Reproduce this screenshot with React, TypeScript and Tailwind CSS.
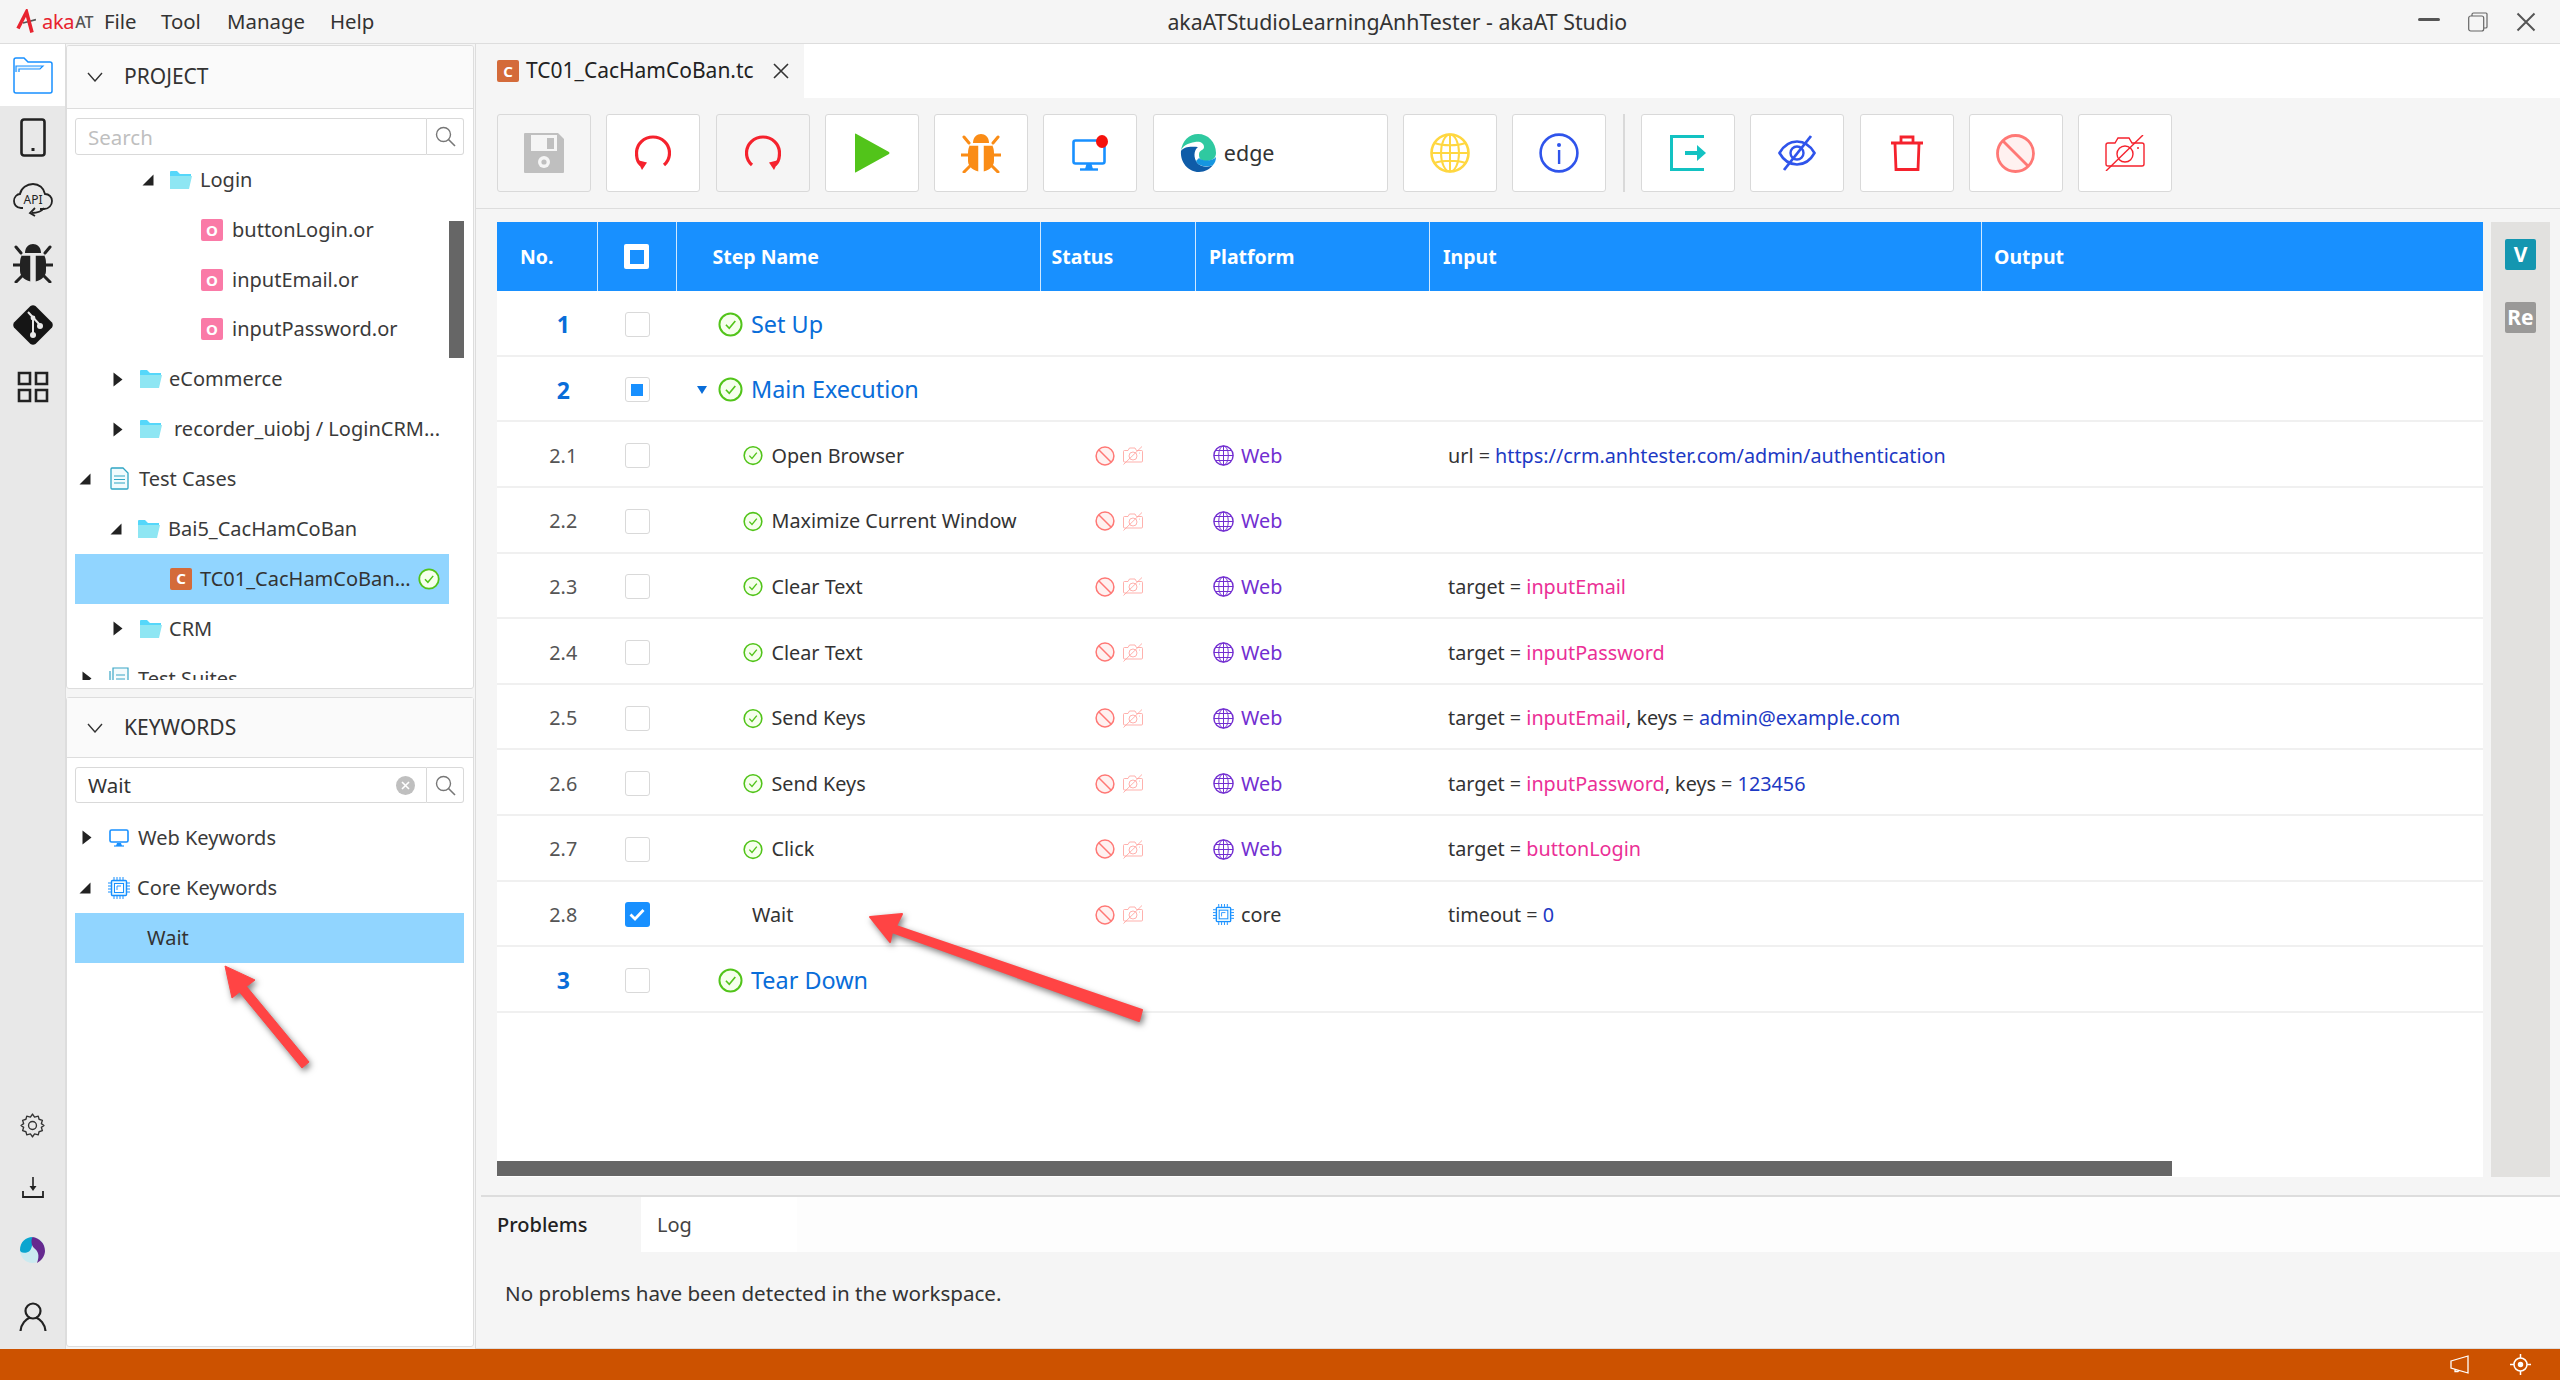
import React from "react";

const Svg = ({ s = 40, w, h, children, vb = "0 0 40 40", className = "" }: any) => (
  <svg width={w ?? s} height={h ?? s} viewBox={vb} fill="none" className={"shrink-0 " + className}>
    {children}
  </svg>
);

const Logo = () => (
  <div className="flex items-center w-[104px] pl-[16px] shrink-0">
    <svg width="20" height="25" viewBox="0 0 20 25" fill="none" className="shrink-0">
      <path d="M7 14 L20 10.5" stroke="#555" strokeWidth="1.8" />
      <path d="M2 19.5 L10.5 3 L16 23.5" stroke="#e8232f" strokeWidth="3.6" strokeLinejoin="miter" />
    </svg>
    <span className="text-[20px] leading-none text-[#e8232f] ml-[6px] tracking-[-0.3px]">aka</span>
    <span className="text-[16px] leading-none text-[#555] font-medium ml-[1px]">AT</span>
  </div>
);

const Expanded = () => (
  <svg width="12" height="12" viewBox="0 0 12 12" className="shrink-0">
    <path d="M11.5 0.5 V11.5 H0.5 Z" fill="#222" />
  </svg>
);
const Collapsed = () => (
  <svg width="10" height="15" viewBox="0 0 10 15" className="shrink-0">
    <path d="M0.5 0.5 L9.5 7.5 L0.5 14.5 Z" fill="#222" />
  </svg>
);
const Folder = () => (
  <svg width="22" height="18" viewBox="0 0 22 18" className="shrink-0">
    <path d="M0 1 Q0 0 1 0 H7 L10 3 H21 V6 H0 Z" fill="#55d7fa" />
    <path d="M0 5 H22 L19 18 H0 Z" fill="#8ee6f3" />
  </svg>
);
const OBadge = () => (
  <span className="w-[22px] h-[22px] rounded-[2px] bg-[#fa7aa7] text-white text-[15px] font-bold leading-[22px] text-center shrink-0">O</span>
);
const CBadge = ({ sz = 22 }: { sz?: number }) => (
  <span
    className="rounded-[2px] bg-[#d46b3a] text-white text-[15px] font-bold text-center shrink-0 flex items-center justify-center"
    style={{ width: sz, height: sz }}
  >
    C
  </span>
);
const CheckCircle = ({ s = 20, w, h }: { s?: number; w?: number; h?: number }) => (
  <svg width={w ?? s} height={h ?? s} viewBox="0 0 24 24" className="shrink-0">
    <circle cx="12" cy="12" r="10.6" fill="#f6ffed" stroke="#52c41a" strokeWidth="1.9" />
    <path d="M7.6 12.2 L10.8 15.6 L16.6 8.6" fill="none" stroke="#52c41a" strokeWidth="1.6" />
  </svg>
);
const DocIcon = () => (
  <svg width="19" height="23" viewBox="0 0 19 23" className="shrink-0">
    <path d="M1 2 Q1 1 2 1 H13 L18 6 V21 Q18 22 17 22 H2 Q1 22 1 21 Z" fill="#f1fbfd" stroke="#2fa5c4" strokeWidth="1.3" />
    <path d="M4 9 H15 M4 12.5 H15 M4 16 H15" stroke="#2fa5c4" strokeWidth="1.2" />
  </svg>
);
const SuitesIcon = () => (
  <svg width="20" height="23" viewBox="0 0 20 23" className="shrink-0">
    <path d="M1 4 V21 H16 M4 1 H19 V18 H4 Z" fill="#f4fbfd" stroke="#3aa6c6" strokeWidth="1.2" />
    <path d="M7 8 H16 M7 12 H16" stroke="#3aa6c6" strokeWidth="1.2" />
  </svg>
);
const MonitorIcon = () => (
  <svg width="20" height="18" viewBox="0 0 20 18" className="shrink-0">
    <rect x="1" y="1" width="18" height="12" rx="1.5" fill="#fff" stroke="#1890ff" strokeWidth="1.6" />
    <path d="M7 17 L8 14 H12 L13 17 Z" fill="#1890ff" />
    <path d="M5 17 H15" stroke="#1890ff" strokeWidth="1.2" />
  </svg>
);
const Chip = ({ s = 22 }: { s?: number }) => (
  <svg width={s} height={s} viewBox="0 0 22 22" className="shrink-0">
    <rect x="3.5" y="3.5" width="15" height="15" rx="1" fill="#e6f7ff" stroke="#1890ff" strokeWidth="1.4" />
    <rect x="6.5" y="6.5" width="9" height="9" fill="#fff" stroke="#1890ff" strokeWidth="1" />
    <path d="M9 9 H13 M9 9 V13" stroke="#1890ff" strokeWidth="0.9" />
    <path d="M6 0 V3 M9 0 V3 M12 0 V3 M15 0 V3 M6 19 V22 M9 19 V22 M12 19 V22 M15 19 V22 M0 6 H3 M0 9 H3 M0 12 H3 M0 15 H3 M19 6 H22 M19 9 H22 M19 12 H22 M19 15 H22" stroke="#1890ff" strokeWidth="1" />
  </svg>
);
const SearchGlass = () => (
  <svg width="21" height="21" viewBox="0 0 21 21" className="shrink-0">
    <circle cx="8.5" cy="8.5" r="7" fill="none" stroke="#777" strokeWidth="1.4" />
    <path d="M13.5 13.5 L20 20" stroke="#777" strokeWidth="1.6" />
  </svg>
);
const Chevron = () => (
  <svg width="16" height="10" viewBox="0 0 16 10" className="shrink-0">
    <path d="M1 1 L8 9 L15 1" fill="none" stroke="#333" strokeWidth="1.4" />
  </svg>
);

const Row = ({ pl, children }: { pl: string; children: React.ReactNode }) => (
  <div className={"h-[49.85px] flex items-center text-[20px] leading-none text-[#3a3a3a] whitespace-nowrap " + pl}>{children}</div>
);

const PanelHeader = ({ title, h }: { title: string; h: string }) => (
  <div className={"shrink-0 flex items-center bg-[#fafafa] border-b border-[#ddd] pl-[20px] text-[21px] text-[#333] " + h}>
    <Chevron />
    <span className="ml-[21px]">{title}</span>
  </div>
);

const SearchBox = ({ value }: { value?: string }) => (
  <div className={"flex ml-[8px] mr-[9px] mt-[9px] shrink-0 " + (value ? "h-[36px]" : "h-[37px]")}>
    <div className="flex-1 border border-[#d9d9d9] rounded-l-[3px] flex items-center pl-[12px] pr-[11px] pt-[1px] text-[20.5px] bg-white">
      {value ? <span className="text-[#333] flex-1">{value}</span> : <span className="text-[#bfbfbf]">Search</span>}
      {value && (
        <span className="w-[19px] h-[19px] rounded-full bg-[#bfbfbf] flex items-center justify-center">
          <svg width="9" height="9" viewBox="0 0 9 9">
            <path d="M1 1 L8 8 M8 1 L1 8" stroke="#fff" strokeWidth="1.6" />
          </svg>
        </span>
      )}
    </div>
    <div className="w-[37px] border border-l-0 border-[#d9d9d9] rounded-r-[3px] flex items-center justify-center bg-white">
      <SearchGlass />
    </div>
  </div>
);

const Rail = () => (
  <div className="w-[66px] shrink-0 bg-[#e8e8e8] border-r border-[#ddd] flex flex-col justify-between pb-[17px]">
    <div className="flex flex-col">
      <div className="h-[62px] bg-white flex items-center justify-center">
        <Svg w={40} h={37} vb="0 0 40 37">
          <path d="M1 34 V3 Q1 1 3 1 H11 L15 5 H37 Q39 5 39 7 V34 Q39 36 37 36 H3 Q1 36 1 34 Z" fill="#fff" stroke="#1890ff" strokeWidth="1.5" />
          <path d="M3 15 V9 H30 L27 12 H6 V15" fill="#e6f4ff" stroke="#1890ff" strokeWidth="1.2" />
        </Svg>
      </div>
      <div className="h-[63px] flex items-center justify-center">
        <Svg w={26} h={39} vb="0 0 26 39">
          <rect x="1.5" y="1.5" width="23" height="36" rx="2.5" stroke="#222" strokeWidth="2.6" />
          <rect x="11.5" y="30" width="3" height="3" fill="#222" />
        </Svg>
      </div>
      <div className="h-[62px] flex items-center justify-center">
        <svg width="40" height="34" viewBox="0 0 40 34" className="shrink-0">
          <path d="M10 25 H8 C3 25 1 21 1 18 C1 14 4 11 7 11 C8 5 14 1 20 1 C26 1 31 5 32 11 C36 11 39 14 39 18 C39 22 36 26 31 26 H27" fill="none" stroke="#222" strokeWidth="1.8" />
          <path d="M31 25 C28 29 24 30 19 30 M22 25 L17 30 L22 33" fill="none" stroke="#222" strokeWidth="1.8" />
          <text x="20" y="21" textAnchor="middle" fontSize="12" fill="#222" fontFamily="Noto Sans">API</text>
        </svg>
      </div>
      <div className="h-[63px] flex items-center justify-center">
        <BugIcon color="#222" bg="#e8e8e8" />
      </div>
      <div className="h-[62px] flex items-center justify-center">
        <svg width="40" height="40" viewBox="0 0 40 40" className="shrink-0">
          <path d="M17.5 1 Q20 -0.5 22.5 1 L39 17.5 Q40.5 20 39 22.5 L22.5 39 Q20 40.5 17.5 39 L1 22.5 Q-0.5 20 1 17.5 Z" fill="#151515" />
          <path d="M15 7 L27 20 M20 13 V30" stroke="#e8e8e8" strokeWidth="2" />
          <circle cx="20" cy="30" r="3" fill="#e8e8e8" />
          <circle cx="27" cy="21" r="3" fill="#e8e8e8" />
          <circle cx="20" cy="13" r="2.4" fill="#e8e8e8" />
        </svg>
      </div>
      <div className="h-[62px] flex items-center justify-center">
        <svg width="32" height="32" viewBox="0 0 32 32" className="shrink-0">
          <path d="M2 2 H13 V13 H2 Z M19 2 H30 V13 H19 Z M2 19 H13 V30 H2 Z M19 19 H30 V30 H19 Z" fill="none" stroke="#222" strokeWidth="2.6" />
        </svg>
      </div>
    </div>
    <div className="flex flex-col gap-[39px] items-center">
      <svg width="25" height="25" viewBox="0 0 24 24" className="shrink-0">
        <path d="M12 1 L14 4 L17.5 3 L18.3 6 L21.5 7 L20.5 10.2 L23 12 L20.5 13.8 L21.5 17 L18.3 18 L17.5 21 L14 20 L12 23 L10 20 L6.5 21 L5.7 18 L2.5 17 L3.5 13.8 L1 12 L3.5 10.2 L2.5 7 L5.7 6 L6.5 3 L10 4 Z" fill="none" stroke="#333" strokeWidth="1.3" strokeLinejoin="round" />
        <circle cx="12" cy="12" r="3.8" fill="none" stroke="#333" strokeWidth="1.3" />
      </svg>
      <svg width="22" height="21" viewBox="0 0 22 21" className="shrink-0">
        <path d="M11 0 V12" stroke="#222" strokeWidth="1.6" />
        <path d="M7.5 9 L11 14 L14.5 9 Z" fill="#222" />
        <path d="M1 14 V20 H21 V14" fill="none" stroke="#222" strokeWidth="1.8" />
      </svg>
      <svg width="25" height="26" viewBox="0 0 25 26" className="shrink-0">
        <ellipse cx="12.5" cy="13" rx="12.5" ry="13" fill="#cbeaf0" />
        <path d="M12.5 0 C6 0 0 5 0 13 C0 15 3 17 8 15 C11 14 13 9 12.5 0 Z" fill="#0aa5cf" />
        <path d="M12.5 0 C19 1 25 6 25 14 C25 19 21 24 17 26 C20 18 18 14 14 11 C11 8 11 3 12.5 0 Z" fill="#66298f" />
      </svg>
      <svg width="28" height="30" viewBox="0 0 28 30" className="shrink-0">
        <circle cx="14" cy="9" r="7.5" fill="none" stroke="#222" strokeWidth="2.2" />
        <path d="M1.5 29 C2 22 7 17 11 15.5 M26.5 29 C26 22 21 17 17 15.5" fill="none" stroke="#222" strokeWidth="2.2" />
      </svg>
    </div>
  </div>
);

function BugIcon({ color, bg, s = 40 }: { color: string; bg: string; s?: number }) {
  return (
    <svg width={s} height={s} viewBox="0 0 40 40" className="shrink-0">
      <path d="M12 10 C12 4 16 1 20 1 C24 1 28 4 28 10 Z" fill={color} />
      <path d="M9 12 H31 C32 14 33 16 33 20 V28 C33 34 27 38 20 39 C13 38 7 34 7 28 V20 C7 16 8 14 9 12 Z" fill={color} />
      <path d="M18 13 H22 V39 H18 Z M9 12 H31" stroke={bg} strokeWidth="1.5" fill={bg} />
      <path d="M8 10 L3 4 M32 10 L37 4 M7 22 H0 M33 22 H40 M9 33 L3 39 M31 33 L37 39" stroke={color} strokeWidth="3" strokeLinecap="round" />
    </svg>
  );
}

const ProjectPanel = () => (
  <div className="h-[644px] shrink-0 mt-[1px] bg-white border border-[#ddd] rounded-[3px] flex flex-col relative overflow-hidden">
    <PanelHeader title="PROJECT" h="h-[63px]" />
    <SearchBox />
    <div className="flex-1 overflow-hidden mb-[8px]">
      <Row pl="pl-[75px]"><Expanded /><span className="w-[16px]" /><Folder /><span className="ml-[8px]">Login</span></Row>
      <Row pl="pl-[134px]"><OBadge /><span className="ml-[9px]">buttonLogin.or</span></Row>
      <Row pl="pl-[134px]"><OBadge /><span className="ml-[9px]">inputEmail.or</span></Row>
      <Row pl="pl-[134px]"><OBadge /><span className="ml-[9px]">inputPassword.or</span></Row>
      <Row pl="pl-[46px]"><Collapsed /><span className="w-[17px]" /><Folder /><span className="ml-[7px]">eCommerce</span></Row>
      <Row pl="pl-[46px]"><Collapsed /><span className="w-[17px]" /><Folder /><span className="ml-[12px]">recorder_uiobj / LoginCRM...</span></Row>
      <Row pl="pl-[12px]"><Expanded /><span className="w-[19px]" /><DocIcon /><span className="ml-[10px]">Test Cases</span></Row>
      <Row pl="pl-[43px]"><Expanded /><span className="w-[16px]" /><Folder /><span className="ml-[8px]">Bai5_CacHamCoBan</span></Row>
      <div className="h-[50px] w-[374px] ml-[8px] bg-[#91d5ff] flex items-center pl-[95px] text-[20px] leading-none text-[#333] whitespace-nowrap">
        <CBadge />
        <span className="ml-[8px] flex-1">TC01_CacHamCoBan...</span>
        <span className="mr-[9px] flex"><CheckCircle s={22} /></span>
      </div>
      <Row pl="pl-[46px]"><Collapsed /><span className="w-[17px]" /><Folder /><span className="ml-[7px]">CRM</span></Row>
      <Row pl="pl-[15px]"><Collapsed /><span className="w-[17px]" /><SuitesIcon /><span className="ml-[9px]">Test Suites</span></Row>
    </div>
    <div className="absolute left-[382px] top-[175px] w-[15px] h-[137px] bg-[#666]" />
  </div>
);

const KeywordsPanel = () => (
  <div className="h-[650px] shrink-0 mt-[8px] bg-white border border-[#ddd] rounded-[3px] flex flex-col">
    <PanelHeader title="KEYWORDS" h="h-[60px]" />
    <SearchBox value="Wait" />
    <div className="h-[10px] shrink-0" />
    <Row pl="pl-[15px]"><Collapsed /><span className="w-[17px]" /><MonitorIcon /><span className="ml-[9px]">Web Keywords</span></Row>
    <Row pl="pl-[12px]"><Expanded /><span className="w-[17px]" /><Chip /><span className="ml-[7px]">Core Keywords</span></Row>
    <div className="h-[50px] ml-[8px] mr-[9px] bg-[#91d5ff] flex items-center pl-[72px] text-[20px] text-[#333] shrink-0">Wait</div>
  </div>
);

const ToolBtn = ({ children, gray = false, wide = false }: any) => (
  <div className={"h-[78px] shrink-0 border border-[#d9d9d9] rounded-[3px] flex items-center justify-center " + (gray ? "bg-[#f5f5f5] " : "bg-white ") + (wide ? "w-[235px] justify-start pl-[26px]" : "w-[94px]")}>
    {children}
  </div>
);

const Loop = ({ flip = false }: { flip?: boolean }) => (
  <svg width="36" height="36" viewBox="0 0 36 36" className={"shrink-0 " + (flip ? "-scale-x-100" : "")}>
    <path d="M6 30 C2 27 1.5 23 1.5 18 C1.5 9 9 2 18 2 C27 2 34.5 9 34.5 18 C34.5 23 32.5 27 29 30" fill="none" stroke="#f5222d" strokeWidth="3.2" />
    <path d="M2 25 L12 27.5 L7 35 Z" fill="#f5222d" />
  </svg>
);

const Toolbar = () => (
  <div className="h-[111px] shrink-0 border-b border-[#ddd] flex items-start pt-[16px] pl-[21px] gap-[15.3px]">
    <ToolBtn gray>
      <svg width="40" height="40" viewBox="0 0 40 40" className="shrink-0">
        <path d="M0 1 Q0 0 1 0 H34 L40 6 V39 Q40 40 39 40 H1 Q0 40 0 39 Z" fill="#bfbfbf" />
        <rect x="7" y="2" width="26" height="16" fill="#f5f5f5" />
        <rect x="23" y="5" width="7" height="11" fill="#bfbfbf" />
        <circle cx="20" cy="29" r="6" fill="#f5f5f5" />
        <circle cx="20" cy="29" r="2.6" fill="#bfbfbf" />
      </svg>
    </ToolBtn>
    <ToolBtn><Loop /></ToolBtn>
    <ToolBtn gray><Loop flip /></ToolBtn>
    <ToolBtn>
      <svg width="36" height="40" viewBox="0 0 36 40" className="shrink-0">
        <path d="M1 1 Q1 0 2 0.7 L35 19 Q36 20 35 21 L2 39.3 Q1 40 1 39 Z" fill="#52c41a" />
      </svg>
    </ToolBtn>
    <ToolBtn><BugIcon color="#fa8c16" bg="#fff" /></ToolBtn>
    <ToolBtn>
      <svg width="37" height="36" viewBox="0 0 37 36" className="shrink-0">
        <rect x="1.5" y="5.5" width="31" height="23" rx="2" fill="#fff" stroke="#1890ff" strokeWidth="2.6" />
        <path d="M13 34 L14.5 29 H19.5 L21 34 Z" fill="#1890ff" />
        <path d="M8 34.5 H26" stroke="#1890ff" strokeWidth="2.4" />
        <ellipse cx="30" cy="6.5" rx="6" ry="6.5" fill="#f5110c" />
      </svg>
    </ToolBtn>
    <ToolBtn wide>
      <svg width="36" height="38" viewBox="0 0 36 38" className="shrink-0">
        <path d="M1 17 C2 7 9 0 18 0 C28 0 36 8 36 19 C36 25 31 27 26 27 C22 27 19 25 19 21 C19 15 24 17 24 13 C24 9 20 7 15 8 C8 9 2 12 1 17 Z" fill="#2fc9a0" />
        <path d="M1 17 C0 28 8 38 19 38 C25 38 30 35 33 31 C27 34 19 33 16 27 C13 21 15 15 18 13 C10 12 3 13 1 17 Z" fill="#0f5ca8" />
        <path d="M16 27 C18 32 26 34 33 31 C35 29 36 26 36 23 C33 27 24 28 19 24 Z" fill="#1696e0" />
      </svg>
      <span className="ml-[8px] text-[21.5px] text-[#333] leading-none">edge</span>
    </ToolBtn>
    <ToolBtn>
      <svg width="40" height="40" viewBox="0 0 40 40" className="shrink-0" fill="none" stroke="#ffd740" strokeWidth="2">
        <circle cx="20" cy="20" r="18.5" strokeWidth="2.6" />
        <ellipse cx="20" cy="20" rx="9" ry="18.5" />
        <path d="M20 1.5 V38.5 M1.5 20 H38.5 M4.5 10 C13 13 27 13 35.5 10 M4.5 30 C13 27 27 27 35.5 30" />
      </svg>
    </ToolBtn>
    <ToolBtn>
      <svg width="40" height="40" viewBox="0 0 40 40" className="shrink-0">
        <circle cx="20" cy="20" r="18.4" fill="#fff" stroke="#2f54eb" strokeWidth="2.6" />
        <rect x="18.9" y="17" width="2.4" height="14" fill="#2f54eb" />
        <circle cx="20" cy="12" r="2" fill="#2f54eb" />
      </svg>
    </ToolBtn>
    <div className="w-[2px] h-[78px] bg-[#d9d9d9] mx-[1px] shrink-0" />
    <ToolBtn>
      <svg width="36" height="36" viewBox="0 0 36 36" className="shrink-0">
        <path d="M34 1.5 H1.5 V34.5 H34" fill="none" stroke="#13c2c2" strokeWidth="3" />
        <path d="M15 16 H27 V10 L36 18 L27 26 V20 H15 Z" fill="#13c2c2" />
      </svg>
    </ToolBtn>
    <ToolBtn>
      <svg width="38" height="38" viewBox="0 0 38 38" className="shrink-0">
        <path d="M1.5 19 C6 11 12 7.5 19 7.5 C26 7.5 32 11 36.5 19 C32 27 26 30.5 19 30.5 C12 30.5 6 27 1.5 19 Z" fill="none" stroke="#2f54eb" strokeWidth="2.6" />
        <circle cx="19" cy="19" r="6.5" fill="none" stroke="#2f54eb" strokeWidth="2.4" />
        <path d="M6 36 L33 2" stroke="#2f54eb" strokeWidth="2.8" />
      </svg>
    </ToolBtn>
    <ToolBtn>
      <svg width="34" height="36" viewBox="0 0 34 36" className="shrink-0">
        <path d="M1 8 H33" stroke="#f5222d" strokeWidth="3" />
        <path d="M11 7 V2 H23 V7" fill="none" stroke="#f5222d" strokeWidth="2.8" />
        <path d="M5 9 L6 34.5 H28 L29 9" fill="none" stroke="#f5222d" strokeWidth="2.8" />
      </svg>
    </ToolBtn>
    <ToolBtn>
      <svg width="39" height="39" viewBox="0 0 39 39" className="shrink-0">
        <circle cx="19.5" cy="19.5" r="18" fill="#fff1f0" stroke="#ff7875" strokeWidth="2.8" />
        <path d="M7 7 L32 32" stroke="#ff7875" strokeWidth="2.8" />
      </svg>
    </ToolBtn>
    <ToolBtn>
      <CameraOff w={40} h={36} color="#f5222d" sw={1.4} />
    </ToolBtn>
  </div>
);

function CameraOff({ w, h, color, sw = 1.6, fill = "none" }: any) {
  return (
    <svg width={w} height={h} viewBox="0 0 40 36" className="shrink-0">
      <path d="M1 10 Q1 8 3 8 H10 L13 3 H24 L27 8 H37 Q39 8 39 10 V29 Q39 31 37 31 H3 Q1 31 1 29 Z" fill={fill} stroke={color} strokeWidth={sw} />
      <circle cx="20" cy="19" r="8" fill="none" stroke={color} strokeWidth={sw} />
      <circle cx="33" cy="13" r="1" fill={color} />
      <path d="M1 36 L38 0" stroke={color} strokeWidth={sw} />
    </svg>
  );
}

const Ban = () => (
  <svg width="20" height="20" viewBox="0 0 20 20" className="shrink-0">
    <circle cx="10" cy="10" r="8.9" fill="#fff1f0" stroke="#ff7875" strokeWidth="1.5" />
    <path d="M4 4 L16 16" stroke="#ff7875" strokeWidth="1.5" />
  </svg>
);
const Globe = () => (
  <svg width="21" height="21" viewBox="0 0 21 21" fill="none" stroke="#722ed1" strokeWidth="1" className="shrink-0">
    <circle cx="10.5" cy="10.5" r="9.6" strokeWidth="1.4" />
    <ellipse cx="10.5" cy="10.5" rx="4.8" ry="9.6" />
    <path d="M10.5 1 V20 M1 10.5 H20 M2.5 5.5 H18.5 M2.5 15.5 H18.5" />
  </svg>
);

const gridCols = "grid grid-cols-[100.5px_79px_364px_155.5px_234px_552px_1fr]";

const Box = ({ kind }: { kind?: "check" | "part" }) =>
  kind === "check" ? (
    <span className="w-[25px] h-[25px] rounded-[3px] bg-[#1890ff] flex items-center justify-center">
      <svg width="16" height="13" viewBox="0 0 16 13"><path d="M1.5 6.5 L6 11 L14.5 2" fill="none" stroke="#fff" strokeWidth="2.8" /></svg>
    </span>
  ) : (
    <span className="w-[25px] h-[25px] rounded-[3px] bg-white border border-[#d9d9d9] flex items-center justify-center">
      {kind === "part" && <span className="w-[12px] h-[12px] bg-[#1890ff]" />}
    </span>
  );

type Child = { no: string; name: string; input?: React.ReactNode; wait?: boolean };

const P = ({ children }: any) => <span className="text-[#eb2f96]">{children}</span>;
const B = ({ children }: any) => <span className="text-[#1d39c4]">{children}</span>;

const children: Child[] = [
  { no: "2.1", name: "Open Browser", input: <>url = <B>https://crm.anhtester.com/admin/authentication</B></> },
  { no: "2.2", name: "Maximize Current Window" },
  { no: "2.3", name: "Clear Text", input: <>target = <P>inputEmail</P></> },
  { no: "2.4", name: "Clear Text", input: <>target = <P>inputPassword</P></> },
  { no: "2.5", name: "Send Keys", input: <>target = <P>inputEmail</P>, keys = <B>admin@example.com</B></> },
  { no: "2.6", name: "Send Keys", input: <>target = <P>inputPassword</P>, keys = <B>123456</B></> },
  { no: "2.7", name: "Click", input: <>target = <P>buttonLogin</P></> },
  { no: "2.8", name: "Wait", wait: true, input: <>timeout = <B>0</B></> },
];

const rowCls = gridCols + " h-[65.64px] border-b-2 border-[#f0f0f0] items-center pt-[3px]";

const Top = ({ no, name, caret, box }: { no: string; name: string; caret?: boolean; box?: "part" }) => (
  <div className={rowCls}>
    <div className="pl-[32px] text-center text-[23px] font-bold text-[#096dd9]">{no}</div>
    <div className="flex justify-center"><Box kind={box} /></div>
    <div className="pl-[19px] flex items-center text-[23.4px] text-[#096dd9] whitespace-nowrap">
      <span className="w-[22.5px] flex justify-start">
        {caret && (
          <svg width="10" height="8" viewBox="0 0 10 8" className="ml-[1px]"><path d="M0 0 H10 L5 8 Z" fill="#096dd9" /></svg>
        )}
      </span>
      <CheckCircle s={25} />
      <span className="ml-[8px]">{name}</span>
    </div>
  </div>
);

const ChildRow = ({ c }: { c: Child }) => (
  <div className={rowCls + " text-[19.8px] text-[#333] whitespace-nowrap"}>
    <div className="pl-[32px] text-center text-[#555]">{c.no}</div>
    <div className="flex justify-center"><Box kind={c.wait ? "check" : undefined} /></div>
    <div className={"flex items-center " + (c.wait ? "pl-[75.5px]" : "pl-[66.5px]")}>
      {!c.wait && <CheckCircle w={20} h={21} />}
      <span className={c.wait ? "" : "ml-[8.5px]"}>{c.name}</span>
    </div>
    <div className="pl-[54.5px] flex items-center gap-[8px]">
      <Ban />
      <CameraOff w={20} h={19} color="#ffa39e" sw={1.7} />
    </div>
    <div className="pl-[17px] flex items-center gap-[7px]">
      {c.wait ? (
        <><Chip s={21} /><span className="text-[#333]">core</span></>
      ) : (
        <><Globe /><span className="text-[#722ed1]">Web</span></>
      )}
    </div>
    <div className="pl-[18px]">{c.input}</div>
  </div>
);

const Table = () => (
  <div className="w-[1986px] h-[955px] bg-white relative shrink-0 overflow-hidden">
    <div className={gridCols + " h-[69px] bg-[#1890ff] text-white text-[19.5px] font-bold items-stretch"}>
      <div className="pl-[23px] flex items-center border-r border-[#cfe8ff]">No.</div>
      <div className="flex items-center justify-center border-r border-[#cfe8ff]">
        <span className="w-[25px] h-[25px] bg-white rounded-[2px] flex items-center justify-center">
          <span className="w-[14px] h-[14px] bg-[#1890ff]" />
        </span>
      </div>
      <div className="pl-[36px] flex items-center border-r border-[#cfe8ff]">Step Name</div>
      <div className="pl-[11px] flex items-center border-r border-[#cfe8ff]">Status</div>
      <div className="pl-[13px] flex items-center border-r border-[#cfe8ff]">Platform</div>
      <div className="pl-[13px] flex items-center border-r border-[#cfe8ff]">Input</div>
      <div className="pl-[12px] flex items-center">Output</div>
    </div>
    <Top no="1" name="Set Up" />
    <Top no="2" name="Main Execution" caret box="part" />
    {children.map((c) => (
      <ChildRow key={c.no} c={c} />
    ))}
    <Top no="3" name="Tear Down" />
    <div className="absolute left-0 top-[939px] w-[1675px] h-[15px] bg-[#666]" />
  </div>
);

const Arrows = () => (
  <>
    <svg width="110" height="125" viewBox="0 0 110 125" className="absolute left-[215px] top-[957px] drop-shadow-[2px_3px_3px_rgba(0,0,0,0.5)]">
      <path d="M10 9 L40 23 L31.5 29.5 L94 105 L87 111 L24.5 35 L17 41 Z" fill="#ff4444" stroke="#ff4444" strokeWidth="1" strokeLinejoin="round" />
    </svg>
    <svg width="300" height="130" viewBox="0 0 300 130" className="absolute left-[860px] top-[905px] drop-shadow-[2px_3px_3px_rgba(0,0,0,0.5)]">
      <path d="M10 12 L42 9 L36 21 L282 105 L279 116 L32 27 L30 37 Z" fill="#ff4444" stroke="#ff4444" strokeWidth="2" strokeLinejoin="round" />
    </svg>
  </>
);

export default function App() {
  return (
    <div className="relative w-[2560px] h-[1380px] overflow-hidden flex flex-col bg-[#f5f5f5] font-['Noto_Sans',sans-serif] text-[#333]">
      <div className="h-[44px] shrink-0 border-b border-[#ddd] bg-[#f5f5f5] flex items-center text-[20.4px]">
        <Logo />
        <span className="w-[57px]">File</span>
        <span className="w-[66px]">Tool</span>
        <span className="w-[103px]">Manage</span>
        <span>Help</span>
        <span className="ml-[793px] w-[1000px] whitespace-nowrap text-[21.3px]">akaATStudioLearningAnhTester - akaAT Studio</span>
        <div className="ml-auto flex items-center mr-[24px] gap-[28px]">
          <svg width="22" height="4" viewBox="0 0 22 4" className="mb-[4px]"><rect width="22" height="3" rx="1.5" fill="#555" /></svg>
          <svg width="20" height="20" viewBox="0 0 20 20">
            <rect x="0.7" y="4" width="15" height="15" rx="2" fill="#f5f5f5" stroke="#666" strokeWidth="1.2" />
            <path d="M4 4 V2.5 Q4 1 5.5 1 H18 Q19 1 19 2 V15 Q19 16 17.5 16 H16" fill="none" stroke="#666" strokeWidth="1.2" />
          </svg>
          <svg width="20" height="20" viewBox="0 0 20 20"><path d="M1.5 1.5 L18.5 18.5 M18.5 1.5 L1.5 18.5" stroke="#555" strokeWidth="2" /></svg>
        </div>
      </div>
      <div className="flex-1 flex min-h-0">
        <Rail />
        <div className="w-[408px] shrink-0 flex flex-col">
          <ProjectPanel />
          <KeywordsPanel />
        </div>
        <div className="flex-1 ml-[1px] border-l border-[#ddd] flex flex-col min-w-0">
          <div className="h-[54px] shrink-0 bg-white flex">
            <div className="w-[328px] bg-[#f5f5f5] flex items-center pl-[21px] text-[21px] text-[#222]">
              <CBadge />
              <span className="ml-[7px]">TC01_CacHamCoBan.tc</span>
              <svg width="16" height="16" viewBox="0 0 16 16" className="ml-[19px]"><path d="M1 1 L15 15 M15 1 L1 15" stroke="#333" strokeWidth="1.6" /></svg>
            </div>
          </div>
          <Toolbar />
          <div className="h-[968px] shrink-0 flex pt-[13px] pl-[21px] gap-[8px] items-start">
            <Table />
            <div className="w-[59px] h-[955px] bg-[#e2e1df] flex flex-col items-center pt-[17px] gap-[32px] shrink-0">
              <span className="w-[31px] h-[31px] rounded-[2px] bg-[#1496b0] text-white text-[21px] font-bold flex items-center justify-center leading-none">V</span>
              <span className="w-[31px] h-[31px] rounded-[2px] bg-[#9a9998] text-white text-[21px] font-bold flex items-center justify-center leading-none">Re</span>
            </div>
          </div>
          <div className="ml-[5px] mt-[18px] border-t-2 border-[#ddd] h-[57px] bg-[#fdfdfd] flex shrink-0 text-[20px]">
            <div className="w-[160px] bg-[#f5f5f5] flex items-center pl-[16px] text-[#222] font-medium">Problems</div>
            <div className="w-[156px] bg-white flex items-center pl-[16px] text-[#444]">Log</div>
          </div>
          <div className="flex-1 pl-[29px] pt-[26px] text-[20.6px] text-[#333] border-b border-[#ddd]">No problems have been detected in the workspace.</div>
        </div>
      </div>
      <div className="h-[31px] shrink-0 bg-[#cc5200] flex items-center justify-end pr-[29px] gap-[41px]">
        <svg width="19" height="19" viewBox="0 0 19 19" fill="none" stroke="#fff" strokeWidth="1.3">
          <path d="M1 6 L18 1 V18 L1 13 Z M5 14 V16.5 H8 L9 15" />
        </svg>
        <svg width="21" height="21" viewBox="0 0 21 21" fill="none" stroke="#fff" strokeWidth="1.5">
          <circle cx="10.5" cy="10.5" r="6.5" />
          <circle cx="10.5" cy="10.5" r="2" fill="#fff" />
          <path d="M10.5 0 V4 M10.5 17 V21 M0 10.5 H4 M17 10.5 H21" />
        </svg>
      </div>
      <Arrows />
    </div>
  );
}
